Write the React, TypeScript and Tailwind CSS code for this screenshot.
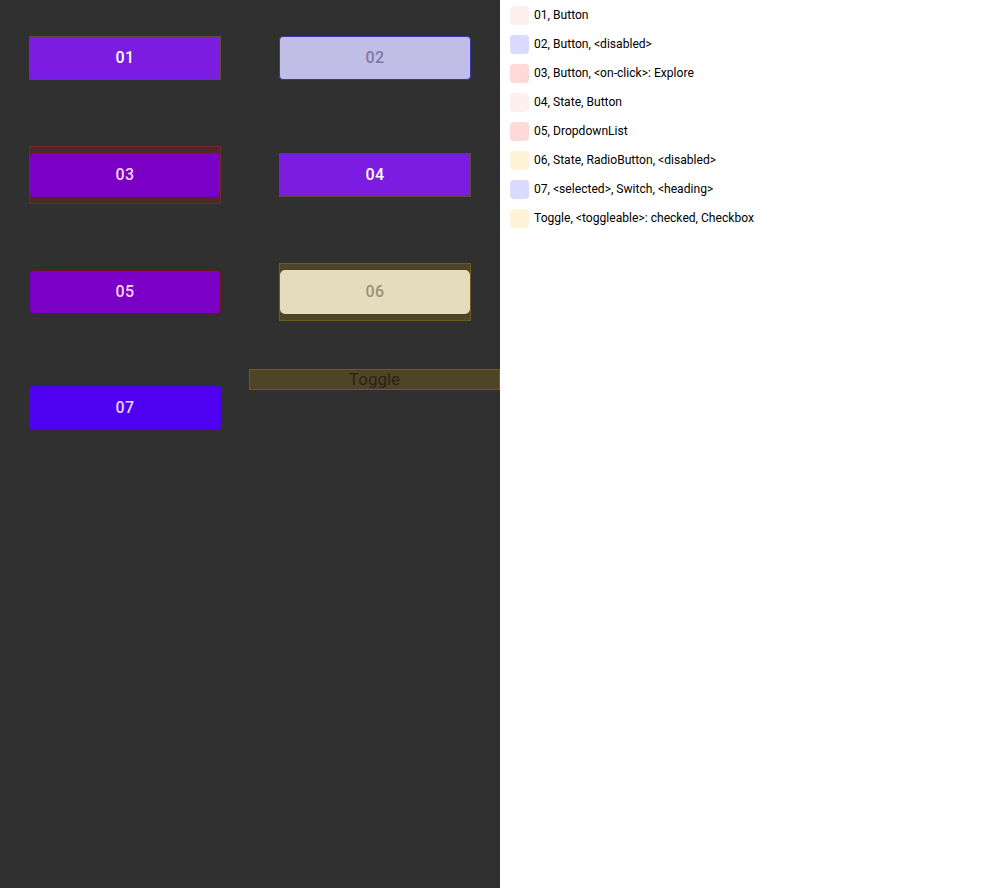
import React from 'react';

const legend = [
  { swatch: 'bg-[#fff0f0]', label: '01, Button' },
  { swatch: 'bg-[#dadaff]', label: '02, Button, <disabled>' },
  { swatch: 'bg-[#ffd8d8]', label: '03, Button, <on-click>: Explore' },
  { swatch: 'bg-[#fff0f0]', label: '04, State, Button' },
  { swatch: 'bg-[#ffd8d8]', label: '05, DropdownList' },
  { swatch: 'bg-[#fff4d8]', label: '06, State, RadioButton, <disabled>' },
  { swatch: 'bg-[#dadaff]', label: '07, <selected>, Switch, <heading>' },
  { swatch: 'bg-[#fff4d8]', label: 'Toggle, <toggleable>: checked, Checkbox' },
];

const Cell: React.FC<{ children?: React.ReactNode }> = ({ children }) => (
  <div className="h-[116.67px] flex items-center justify-center">{children}</div>
);

export default function App() {
  return (
    <div className="flex w-[1000px] h-[888px] font-['Roboto',sans-serif]">
      {/* canvas */}
      <div className="w-[500px] h-full bg-[#303030] grid grid-cols-2 content-start">
        <Cell>
          <div className="w-[192px] h-[44px] bg-[#7b1ce0] border border-[#5a4a3c] flex items-center justify-center text-white text-[16px] font-medium tracking-wide">
            01
          </div>
        </Cell>
        <Cell>
          <div className="w-[192px] h-[44px] bg-[#c0bee6] border border-[#3a38a8] rounded-[4px] flex items-center justify-center text-[#7c7b9e] text-[16px] font-medium tracking-wide">
            02
          </div>
        </Cell>
        <Cell>
          <div className="w-[192px] h-[58px] bg-[#502828] border border-[#6c2a2a] flex items-center justify-center">
            <div className="w-[192px] h-[44px] bg-[#7b00c6] rounded-[4px] flex items-center justify-center text-[#f4d6f0] text-[16px] font-medium tracking-wide">
              03
            </div>
          </div>
        </Cell>
        <Cell>
          <div className="w-[192px] h-[44px] bg-[#7b1ce0] border border-[#5a4a3c] flex items-center justify-center text-white text-[16px] font-medium tracking-wide">
            04
          </div>
        </Cell>
        <Cell>
          <div className="w-[192px] h-[44px] bg-[#7b00c6] border border-[#6a1a1a] rounded-[4px] flex items-center justify-center text-[#f4d6f0] text-[16px] font-medium tracking-wide">
            05
          </div>
        </Cell>
        <Cell>
          <div className="w-[192px] h-[58px] bg-[#4e4428] border border-[#6e5c1c] flex items-center justify-center">
            <div className="w-[192px] h-[44px] bg-[#e4dcbc] rounded-[5px] flex items-center justify-center text-[#9c9274] text-[16px] font-medium tracking-wide">
              06
            </div>
          </div>
        </Cell>
        <Cell>
          <div className="w-[192px] h-[44px] bg-[#5000f0] rounded-[4px] flex items-center justify-center text-[#e4d4ff] text-[16px] font-medium tracking-wide">
            07
          </div>
        </Cell>
        <div className="h-[116.67px] pt-[19px] -ml-px">
          <div className="w-[251px] h-[21px] bg-[#4f4428] border border-[#6e5c1c] flex items-center justify-center text-[#2a2416] text-[17px] leading-none">
            Toggle
          </div>
        </div>
      </div>

      {/* legend */}
      <div className="flex-1 h-full bg-white pt-px pl-[10px]">
        {legend.map((item) => (
          <div key={item.label} className="h-[29px] flex items-center gap-[5px]">
            <div className={`w-[19px] h-[19px] rounded-[4px] ${item.swatch}`} />
            <span className="text-[12.1px] text-black">{item.label}</span>
          </div>
        ))}
      </div>
    </div>
  );
}
